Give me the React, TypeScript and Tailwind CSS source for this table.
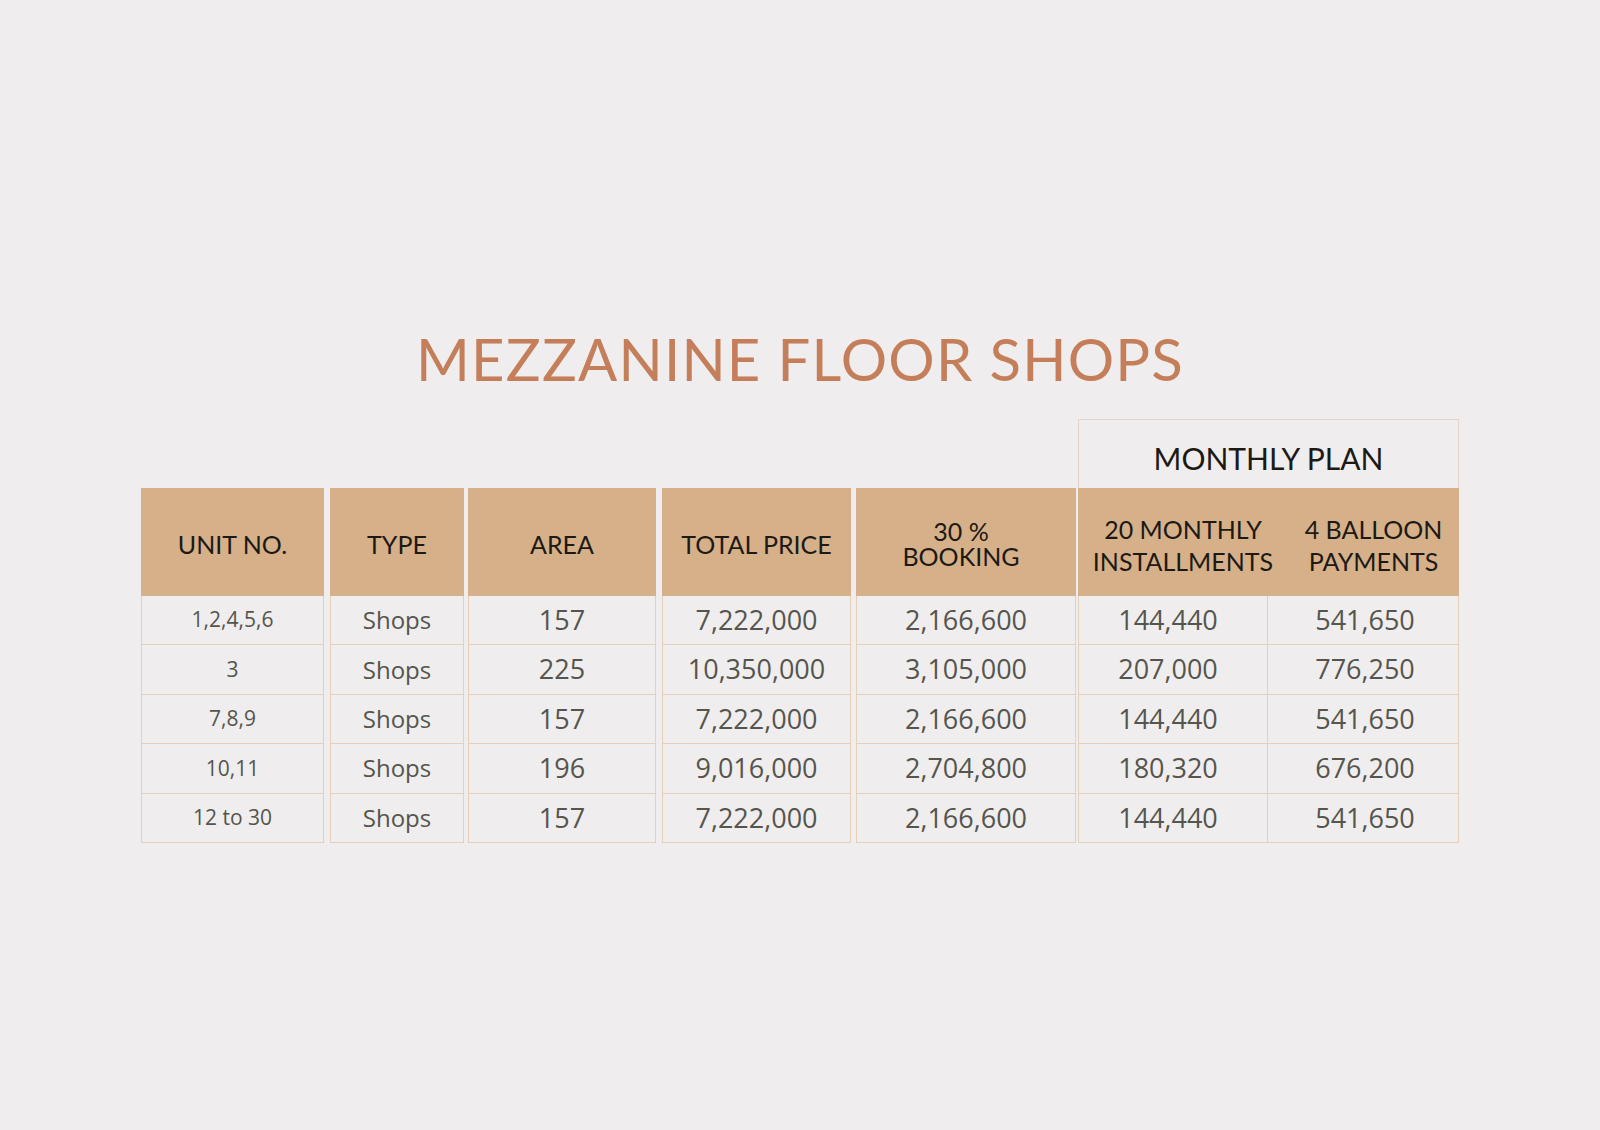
const ROWS = [
  ['1,2,4,5,6', 'Shops', '157', '7,222,000', '2,166,600', '144,440', '541,650'],
  ['3', 'Shops', '225', '10,350,000', '3,105,000', '207,000', '776,250'],
  ['7,8,9', 'Shops', '157', '7,222,000', '2,166,600', '144,440', '541,650'],
  ['10,11', 'Shops', '196', '9,016,000', '2,704,800', '180,320', '676,200'],
  ['12 to 30', 'Shops', '157', '7,222,000', '2,166,600', '144,440', '541,650'],
]

// simple columns (unit, type, area, total, booking)
const COLUMNS = [
  { label: ['UNIT NO.'], width: 'w-[183px]', gap: '', text: 'text-[21px]', head: '' },
  { label: ['TYPE'], width: 'w-[134px]', gap: 'ml-[6px]', text: 'text-[24px]', head: '' },
  { label: ['AREA'], width: 'w-[188px]', gap: 'ml-[4px]', text: 'text-[27px]', head: '' },
  { label: ['TOTAL PRICE'], width: 'w-[189px]', gap: 'ml-[6px]', text: 'text-[27px]', head: '' },
  { label: ['30 %', 'BOOKING'], width: 'w-[220px]', gap: 'ml-[5px]', text: 'text-[27px]', head: 'pr-[10px]' },
]

const headFont = "font-['Lato',sans-serif] text-[#1d1915]"
const dataFont = "font-['Open_Sans',sans-serif] text-[#55554d]"

export default function App() {
  return (
    <div className="flex min-h-[1130px] w-full flex-col items-center bg-[#efedee] pt-[330px]">
      <h1 className="font-['Lato',sans-serif] text-[58px] leading-none tracking-[1.2px] text-[#c47f5a]">
        MEZZANINE FLOOR SHOPS
      </h1>

      <div className="mt-[31px] flex items-end">
        {COLUMNS.map((col, ci) => (
          <div key={ci} className={`flex flex-col ${col.width} ${col.gap}`}>
            <div
              className={`flex h-[108px] items-center justify-center bg-[#d5b089] pt-[4px] text-center text-[25px] leading-[25px] ${headFont} ${col.head}`}
            >
              <p>
                {col.label.map((line, li) => (
                  <span key={line}>
                    {li > 0 && <br />}
                    {line}
                  </span>
                ))}
              </p>
            </div>
            {ROWS.map((row, ri) => (
              <div
                key={ri}
                className={`flex h-[49.4px] items-center justify-center border-x border-b border-[#e4cfba] ${dataFont} ${col.text}`}
              >
                {row[ci]}
              </div>
            ))}
          </div>
        ))}

        {/* monthly plan group */}
        <div className="ml-[2px] flex w-[381px] flex-col">
          <div
            className={`flex h-[69px] items-center justify-center border-x border-t border-[#e3d4c6] pt-[8px] text-[30px] ${headFont}`}
          >
            MONTHLY PLAN
          </div>
          <div
            className={`flex h-[108px] items-center bg-[#d5b089] pt-[6px] text-center text-[25px] leading-[32px] ${headFont}`}
          >
            <p className="w-[210px]">
              20 MONTHLY
              <br />
              INSTALLMENTS
            </p>
            <p className="w-[171px]">
              4 BALLOON
              <br />
              PAYMENTS
            </p>
          </div>
          {ROWS.map((row, ri) => (
            <div key={ri} className={`flex h-[49.4px] text-[27px] ${dataFont}`}>
              <div className="flex w-[190px] items-center justify-center border-x border-b border-[#e4cfba] pr-[10px]">
                {row[5]}
              </div>
              <div className="flex w-[191px] items-center justify-center border-r border-b border-[#e4cfba] pl-[4px]">
                {row[6]}
              </div>
            </div>
          ))}
        </div>
      </div>
    </div>
  )
}
